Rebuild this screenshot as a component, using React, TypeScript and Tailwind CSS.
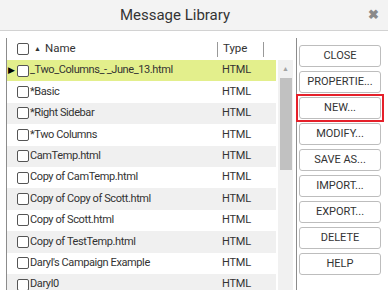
import React from 'react';

const rows = [
  '_Two_Columns_-_June_13.html',
  '*Basic',
  '*Right Sidebar',
  '*Two Columns',
  'CamTemp.html',
  'Copy of CamTemp.html',
  'Copy of Copy of Scott.html',
  'Copy of Scott.html',
  'Copy of TestTemp.html',
  "Daryl's Campaign Example",
  'Daryl0',
];

const buttons = ['CLOSE', 'PROPERTIE...', 'NEW...', 'MODIFY...', 'SAVE AS...', 'IMPORT...', 'EXPORT...', 'DELETE', 'HELP'];

function Box() {
  return <span className="block w-[12px] h-[12px] shrink-0 rounded-[2px] border border-[#555] bg-white" />;
}

export default function App() {
  return (
    <div className="w-[388px] h-[290px] overflow-hidden bg-white font-['Roboto',sans-serif] text-[#333]">
      <div className="relative h-[31px] bg-[#f3f3f3] border-b border-[#d2d2d2] flex items-center justify-center pr-[38px]">
        <span className="text-[15px] text-[#333]">Message Library</span>
        <span className="absolute right-[9px] top-[8px] text-[13px] font-bold text-[#8a8a8a] leading-none">✖</span>
      </div>

      <div className="flex pl-[6px] pt-[7px]">
        {/* grid */}
        <div className="w-[290px] border-l border-[#8c8c8c] flex flex-col">
          <div className="h-[22px] flex items-center text-[11.5px]">
            <span className="w-[10px]" />
            <Box />
            <span className="ml-[5px] text-[7px] leading-none">▲</span>
            <span className="ml-[4px] w-[172px]">Name</span>
            <span className="h-[15px] border-l border-[#999]" />
            <span className="pl-[5px] w-[45px]">Type</span>
            <span className="h-[15px] border-l border-[#999]" />
          </div>
          <div className="flex">
            <div className="w-[269px]">
              {rows.map((r, i) => (
                <div
                  key={r}
                  className={
                    'h-[21.4px] flex items-center text-[11px] tracking-[-0.4px] ' +
                    (i === 0 ? 'bg-[#e3ef8c]' : i % 2 === 0 ? 'bg-[#f0f0f0]' : 'bg-white')
                  }
                >
                  <span className="w-[10px] pl-[1px] text-[9px] leading-none text-black">{i === 0 ? '▶' : ''}</span>
                  <Box />
                  <span className="pl-[1px] w-[193px] whitespace-nowrap overflow-hidden">{r}</span>
                  <span className="tracking-[-0.2px]">HTML</span>
                </div>
              ))}
            </div>
            <div className="ml-[2px] w-[15px] bg-[#f1f1f1] flex flex-col items-center">
              <span className="h-[18px] flex items-center text-[7px] text-[#a3a3a3] leading-none">▲</span>
              <span className="w-[12px] h-[92px] bg-[#c1c1c1]" />
            </div>
          </div>
        </div>

        {/* buttons */}
        <div className="border-l border-[#8c8c8c] pl-[2px] pt-[7px] h-[252px] flex flex-col gap-[4px]">
          {buttons.map((b) =>
            b === 'NEW...' ? (
              <span key={b} className="-m-[3px] p-[1px] border-2 border-[#e5202a] relative z-10">
                <button className="block w-[82px] h-[22px] rounded-[3px] border border-[#bdbdbd] bg-white text-[11px] text-[#333]">
                  {b}
                </button>
              </span>
            ) : (
              <button
                key={b}
                className="w-[82px] h-[22px] rounded-[3px] border border-[#bdbdbd] bg-white text-[11px] text-[#333]"
              >
                {b}
              </button>
            )
          )}
        </div>
      </div>
    </div>
  );
}
